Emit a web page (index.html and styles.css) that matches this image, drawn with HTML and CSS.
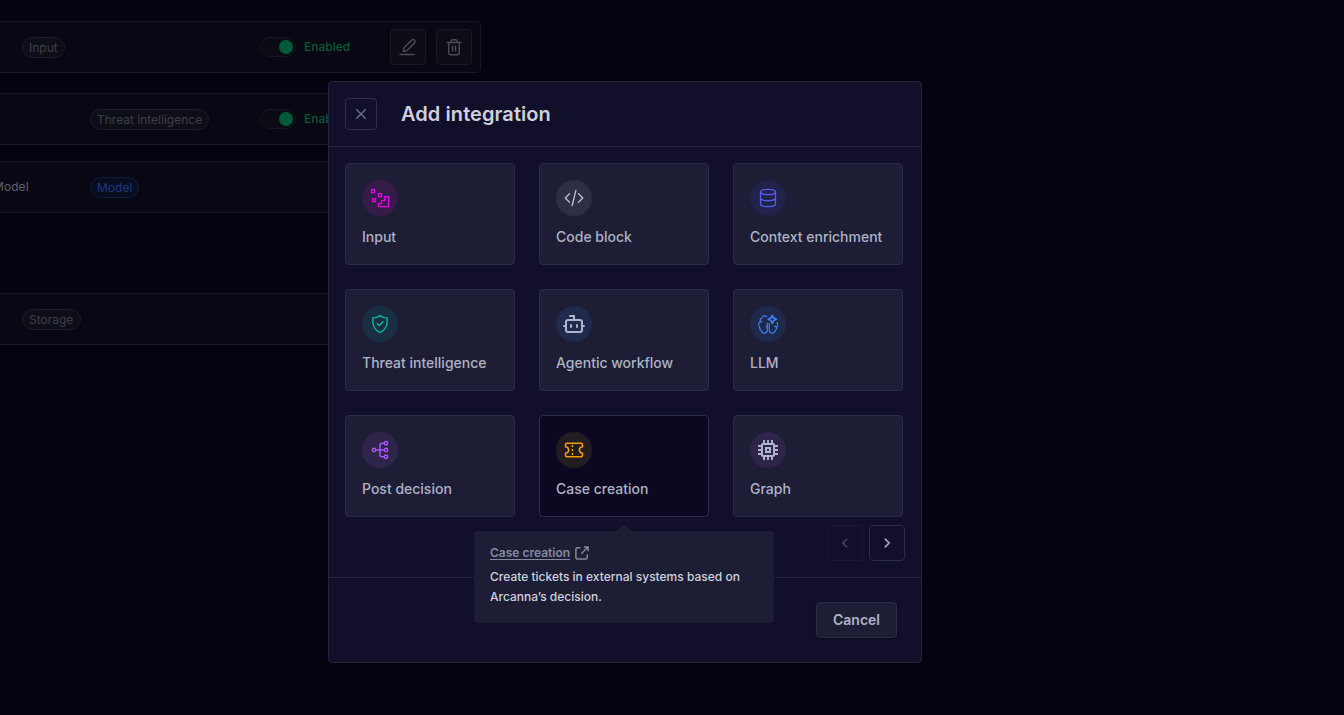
FILE: index.html
```
<!DOCTYPE html>
<html lang="en">
<head>
    <meta charset="UTF-8">
    <meta name="viewport" content="width=device-width, initial-scale=1.0">
    <title>Add integration</title>
    <link rel="stylesheet" href="styles.css">
</head>
<body>
    <main class="pipeline">
        <div class="row">
            <span class="tag tag-near">Input</span>
            <div class="row-actions">
                <span class="toggle"></span>
                <span class="status">Enabled</span>
                <button class="row-button first" aria-label="Edit">
                    <svg width="20" height="20" viewBox="0 0 20 20"><path d="M2 17.5H16M5.5 14.3L6 10.7L13.5 3.2C14.5 2.2 15.8 2.4 16.5 3.1C17.3 3.9 17.3 5.1 16.5 6L9.1 13.6Z"/></svg>
                </button>
                <button class="row-button" aria-label="Delete">
                    <svg width="20" height="20" viewBox="0 0 20 20"><path d="M3 5.5H17M7 5.3V4.3Q7 2.7 8.5 2.7H11.5Q13 2.7 13 4.3V5.3M4.7 6V16Q4.7 17.7 6.4 17.7H13.6Q15.3 17.7 15.3 16V6M8.5 9V14M11.5 9V14"/></svg>
                </button>
            </div>
        </div>
        <div class="row row-threat">
            <span class="tag tag-far">Threat intelligence</span>
            <div class="row-actions">
                <span class="toggle"></span>
                <span class="status">Enabled</span>
            </div>
        </div>
        <div class="row row-model">
            <span class="row-name">Model</span>
            <span class="tag tag-blue">Model</span>
        </div>
        <div class="row row-storage">
            <span class="tag tag-near">Storage</span>
        </div>
    </main>

    <div class="overlay">
        <div class="modal">
            <header class="modal-header">
                <button class="close" aria-label="Close">
                    <svg width="12" height="12" viewBox="0 0 12 12"><path d="M1.2 1.2L10.8 10.8M10.8 1.2L1.2 10.8"/></svg>
                </button>
                <h1>Add integration</h1>
            </header>
            <div class="modal-body">
                <div class="cards">
                    <div class="card">
                        <span class="icon icon-input">
                            <svg width="20" height="20" viewBox="0 0 20 20"><path d="M1.5 1.5H4.5V4.5H1.5ZM8.5 5.5H11.5V8.5H8.5ZM2.5 10.5H5.5V13.5H2.5ZM8.5 18.5V15.5H11.5V12.5H14.5V8.5H18.5V18.5Z"/></svg>
                        </span>
                        <span class="label">Input</span>
                    </div>
                    <div class="card">
                        <span class="icon icon-code">
                            <svg width="20" height="20" viewBox="0 0 20 20"><path d="M5.6 5.6L1.3 10L5.6 14.4M14.4 5.6L18.7 10L14.4 14.4M11.9 2.3L8.1 17.7"/></svg>
                        </span>
                        <span class="label">Code block</span>
                    </div>
                    <div class="card">
                        <span class="icon icon-context">
                            <svg width="20" height="20" viewBox="0 0 20 20"><ellipse cx="10" cy="4" rx="7.5" ry="2.6"/><path d="M2.5 4V16C2.5 17.5 5.8 18.6 10 18.6S17.5 17.5 17.5 16V4M2.5 10C2.5 11.5 5.8 12.6 10 12.6S17.5 11.5 17.5 10"/></svg>
                        </span>
                        <span class="label">Context enrichment</span>
                    </div>
                    <div class="card">
                        <span class="icon icon-threat">
                            <svg width="20" height="20" viewBox="0 0 20 20"><path d="M10 1.5C8 3.2 5.5 4 2.9 3.9C2.2 10.5 3.6 15.8 10 18.5C16.4 15.8 17.8 10.5 17.1 3.9C14.5 4 12 3.2 10 1.5ZM7.2 9.6L9.2 11.5L13 7.8"/></svg>
                        </span>
                        <span class="label">Threat intelligence</span>
                    </div>
                    <div class="card">
                        <span class="icon icon-agentic">
                            <svg width="24" height="24" viewBox="0 0 24 24"><path d="M12 8V4H8M2 14H4M20 14H22M15 13V15M9 13V15"/><rect x="4" y="8" width="16" height="12" rx="2"/></svg>
                        </span>
                        <span class="label">Agentic workflow</span>
                    </div>
                    <div class="card">
                        <span class="icon icon-llm">
                            <svg width="20" height="20" viewBox="0 0 20 20"><path d="M8.6 2.6C7.4 1.2 4.6 1.5 4.2 3.8C2.4 4.3 1.8 6 2.4 7.5C.3 8.6 0 11.5 1.7 13C1.5 15 2.3 16 3.2 16.3C3.8 20 9.2 20 9.4 16.2V9M2.4 7.5L4 8.1M9.4 14Q9.2 12.8 7.6 12.5M11.2 9.5V16.2C11.4 20 16.5 20 17.2 16.3C18.3 15.8 18.9 14.6 18.6 13C19.8 11.8 19.9 9.8 18.9 8.5M18.6 13Q17.8 12.2 16.5 12.4"/><path class="spark" d="M14.3 1.2C14.8 3.8 15.8 4.8 18.5 5.3C15.8 5.8 14.8 7 14.3 9.5C13.8 7 12.8 5.8 10.1 5.3C12.8 4.8 13.8 3.8 14.3 1.2Z"/></svg>
                        </span>
                        <span class="label">LLM</span>
                    </div>
                    <div class="card">
                        <span class="icon icon-decision">
                            <svg width="20" height="20" viewBox="0 0 20 20"><circle cx="4" cy="10" r="1.7"/><circle cx="16" cy="3.3" r="1.7"/><circle cx="16" cy="10" r="1.7"/><circle cx="16" cy="16.7" r="1.7"/><path d="M5.8 10H14.2M14.2 3.3H12Q10 3.3 10 5.3V14.7Q10 16.7 12 16.7H14.2"/></svg>
                        </span>
                        <span class="label">Post decision</span>
                    </div>
                    <div class="card card-active">
                        <span class="icon icon-case">
                            <svg width="20" height="20" viewBox="0 0 20 20"><path d="M3 3.2H17Q18.5 3.2 18.5 4.7V6.7C14.3 7.4 14.3 12.6 18.5 13.3V15.3Q18.5 16.8 17 16.8H3Q1.5 16.8 1.5 15.3V13.3C5.7 12.6 5.7 7.4 1.5 6.7V4.7Q1.5 3.2 3 3.2Z"/><path d="M8.4 5.4V6.4M8.4 9.5V10.5M8.4 13.6V14.6"/></svg>
                        </span>
                        <span class="label">Case creation</span>
                        <div class="tooltip">
                            <a class="tooltip-link">
                                <span>Case creation</span>
                                <svg width="14" height="14" viewBox="0 0 14 14"><path d="M5.5 1.8H2.5Q.9 1.8 .9 3.4V11.5Q.9 13.1 2.5 13.1H10.6Q12.2 13.1 12.2 11.5V8.5M6.3 7.7L13 1M8.8 .9H13.1V5.2"/></svg>
                            </a>
                            <p>Create tickets in external systems based on Arcanna’s decision.</p>
                        </div>
                    </div>
                    <div class="card">
                        <span class="icon icon-graph">
                            <svg width="20" height="20" viewBox="0 0 20 20"><rect x="4" y="4" width="12" height="12" rx="1"/><rect x="8" y="8" width="4" height="4"/><path class="pins" d="M6 0V3M10 0V3M14 0V3M6 17V20M10 17V20M14 17V20M0 6H3M0 10H3M0 14H3M17 6H20M17 10H20M17 14H20"/></svg>
                        </span>
                        <span class="label">Graph</span>
                    </div>
                </div>
                <div class="pager">
                    <button class="page-button disabled" aria-label="Previous">
                        <svg width="12" height="12" viewBox="0 0 12 12"><path d="M8.2 1.7L3.9 6L8.2 10.3"/></svg>
                    </button>
                    <button class="page-button" aria-label="Next">
                        <svg width="12" height="12" viewBox="0 0 12 12"><path d="M3.8 1.7L8.1 6L3.8 10.3"/></svg>
                    </button>
                </div>
            </div>
            <footer class="modal-footer">
                <button class="cancel">Cancel</button>
            </footer>
        </div>
    </div>
</body>
</html>
```
FILE: styles.css
```
* {
    box-sizing: border-box;
}
body {
    margin: 0;
    height: 100vh;
    overflow: hidden;
    font-family: Inter, sans-serif;
    background-color: #04030f;
}
button {
    display: flex;
    align-items: center;
    justify-content: center;
    padding: 0;
    font-family: inherit;
    border-radius: 4px;
}
svg {
    display: block;
    flex: none;
    fill: none;
    stroke: currentColor;
}

/* pipeline list behind the modal */
.pipeline {
    width: 501px;
    margin-left: -20px;
    padding-top: 21px;
}
.row {
    display: flex;
    align-items: center;
    height: 52px;
    padding: 0 8px 0 12px;
    background-color: #080713;
    border: 1px solid #171722;
    border-radius: 4px;
}
.row-threat {
    margin-top: 20px;
}
.row-model {
    margin-top: 16px;
}
.row-storage {
    margin-top: 80px;
}
.row-name {
    width: 97px;
    padding-bottom: 2px;
    font-size: 12px;
    letter-spacing: 0.08px;
    color: #62636b;
}
.tag {
    height: 21px;
    margin-top: 1px;
    padding: 0 6px;
    font-size: 12px;
    line-height: 19px;
    color: #3d4049;
    background-color: #0e0e18;
    border: 1px solid #1d1d27;
    border-radius: 11px;
}
.tag-near {
    margin-left: 29px;
}
.tag-far {
    margin-left: 97px;
}
.tag-blue {
    color: #20397f;
    background-color: #080d20;
    border-color: #101d3e;
}
.row-storage .tag {
    padding-right: 7px;
}
.row-actions {
    display: flex;
    align-items: center;
    width: 212px;
    margin-left: auto;
}
.toggle {
    display: flex;
    align-items: center;
    justify-content: flex-end;
    width: 36px;
    height: 20px;
    padding-right: 2px;
    background-color: #0b0b16;
    border: 1px solid #161620;
    border-radius: 10px;
}
.toggle::before {
    content: "";
    width: 14px;
    height: 14px;
    border-radius: 50%;
    background-color: #035a36;
}
.status {
    margin-left: 8px;
    padding-bottom: 2px;
    font-size: 12px;
    font-weight: 500;
    color: #035a3a;
}
.row-button {
    width: 36px;
    height: 36px;
    margin-left: 10px;
    color: #4b4c55;
    background-color: #0d0d17;
    border: 1px solid #191923;
}
.row-button.first {
    margin-left: 40px;
}
.row-button svg {
    stroke-width: 1.4;
    stroke-linecap: round;
    stroke-linejoin: round;
}

/* modal */
.overlay {
    position: fixed;
    inset: 0;
    padding: 81px 0 0 328px;
}
.modal {
    width: 594px;
    background-color: #120f2a;
    border: 1px solid #25233d;
    border-radius: 4px;
}
.modal-header {
    display: flex;
    align-items: center;
    gap: 24px;
    padding: 16px;
    border-bottom: 1px solid #25233d;
}
.modal-header h1 {
    margin: 0;
    font-size: 20px;
    font-weight: 600;
    line-height: 24px;
    letter-spacing: 0.07px;
    color: #ced1dc;
}
.close {
    width: 32px;
    height: 32px;
    color: #6b708a;
    background: none;
    border: 1px solid #30304a;
}
.close svg {
    stroke-width: 1.4;
}
.modal-body {
    padding: 16px;
}
.cards {
    display: grid;
    grid-template-columns: repeat(3, 170px);
    gap: 24px;
}
.card {
    position: relative;
    height: 102px;
    padding: 16px;
    background-color: #1e1d36;
    border: 1px solid #2b2c46;
    border-radius: 4px;
}
.card-active {
    background-color: #0c0822;
}
.icon {
    display: flex;
    align-items: center;
    justify-content: center;
    width: 36px;
    height: 36px;
    border-radius: 50%;
}
.icon svg {
    stroke-width: 1.3;
    stroke-linecap: round;
    stroke-linejoin: round;
}
.icon-input {
    color: #e600e6;
    background-color: #351b48;
}
.icon-input svg {
    stroke-width: 1.25;
    stroke-linejoin: miter;
}
.icon-code {
    color: #c3c8d9;
    background-color: #2e2e45;
}
.icon-context {
    color: #5a5df5;
    background-color: #21234a;
}
.icon-threat {
    color: #00bfa5;
    background-color: #1b2f43;
}
.icon-agentic {
    color: #acb5c9;
    background-color: #202a4d;
}
.icon-agentic svg {
    stroke-width: 2;
}
.icon-llm {
    color: #3b82f6;
    background-color: #20284b;
}
.icon-llm svg {
    stroke-width: 1.15;
}
.icon-llm .spark {
    stroke-width: 1.5;
}
.icon-decision {
    color: #a855f7;
    background-color: #2f2449;
}
.icon-decision svg {
    stroke-width: 1.5;
}
.icon-case {
    color: #f59e0b;
    background-color: #231d22;
}
.icon-case svg {
    stroke-width: 1.5;
}
.icon-graph {
    color: #b0b5cd;
    background-color: #2f2449;
}
.icon-graph svg {
    stroke-width: 2;
    stroke-linejoin: miter;
    stroke-linecap: butt;
}
.icon-graph .pins {
    stroke-width: 1.9;
}
.label {
    display: block;
    margin-top: 11px;
    font-size: 14px;
    font-weight: 500;
    line-height: 20px;
    white-space: nowrap;
    color: #adb3c3;
}
.pager {
    display: flex;
    justify-content: flex-end;
    gap: 6px;
    margin-top: 8px;
}
.page-button {
    width: 36px;
    height: 36px;
    color: #9da4b5;
    background: none;
    border: 1px solid #2b2c46;
}
.page-button svg {
    stroke-width: 1.7;
}
.page-button.disabled {
    color: #3f405a;
    border-color: #1b1933;
}
.modal-footer {
    display: flex;
    justify-content: flex-end;
    padding: 24px;
    border-top: 1px solid #25233d;
}
.cancel {
    width: 81px;
    height: 36px;
    padding-bottom: 2px;
    font-size: 14px;
    font-weight: 600;
    color: #adb3c3;
    background-color: #1e1d36;
    border: 1px solid #2b2c46;
    box-shadow: 0 1px 2px rgba(0, 0, 0, 0.3);
}

/* tooltip under the active card */
.tooltip {
    position: absolute;
    top: 115px;
    left: 50%;
    z-index: 1;
    width: 300px;
    height: 92px;
    margin-left: -150px;
    padding: 12px 16px 16px;
    font-size: 12px;
    background-color: #1e1d36;
    border-radius: 4px;
}
.tooltip::before {
    content: "";
    position: absolute;
    top: -7px;
    left: 143px;
    border: 7px solid transparent;
    border-top: 0;
    border-bottom-color: #1e1d36;
}
.tooltip-link {
    display: flex;
    align-items: center;
    gap: 5px;
    height: 19px;
    margin-bottom: 5px;
    font-weight: 600;
    color: #828aa0;
}
.tooltip-link span {
    padding-top: 2px;
    line-height: 12px;
    border-bottom: 1px solid #828aa0;
}
.tooltip-link svg {
    stroke-width: 1.5;
}
.tooltip p {
    margin: 0;
    font-weight: 500;
    line-height: 20px;
    color: #ced1dc;
}
```
